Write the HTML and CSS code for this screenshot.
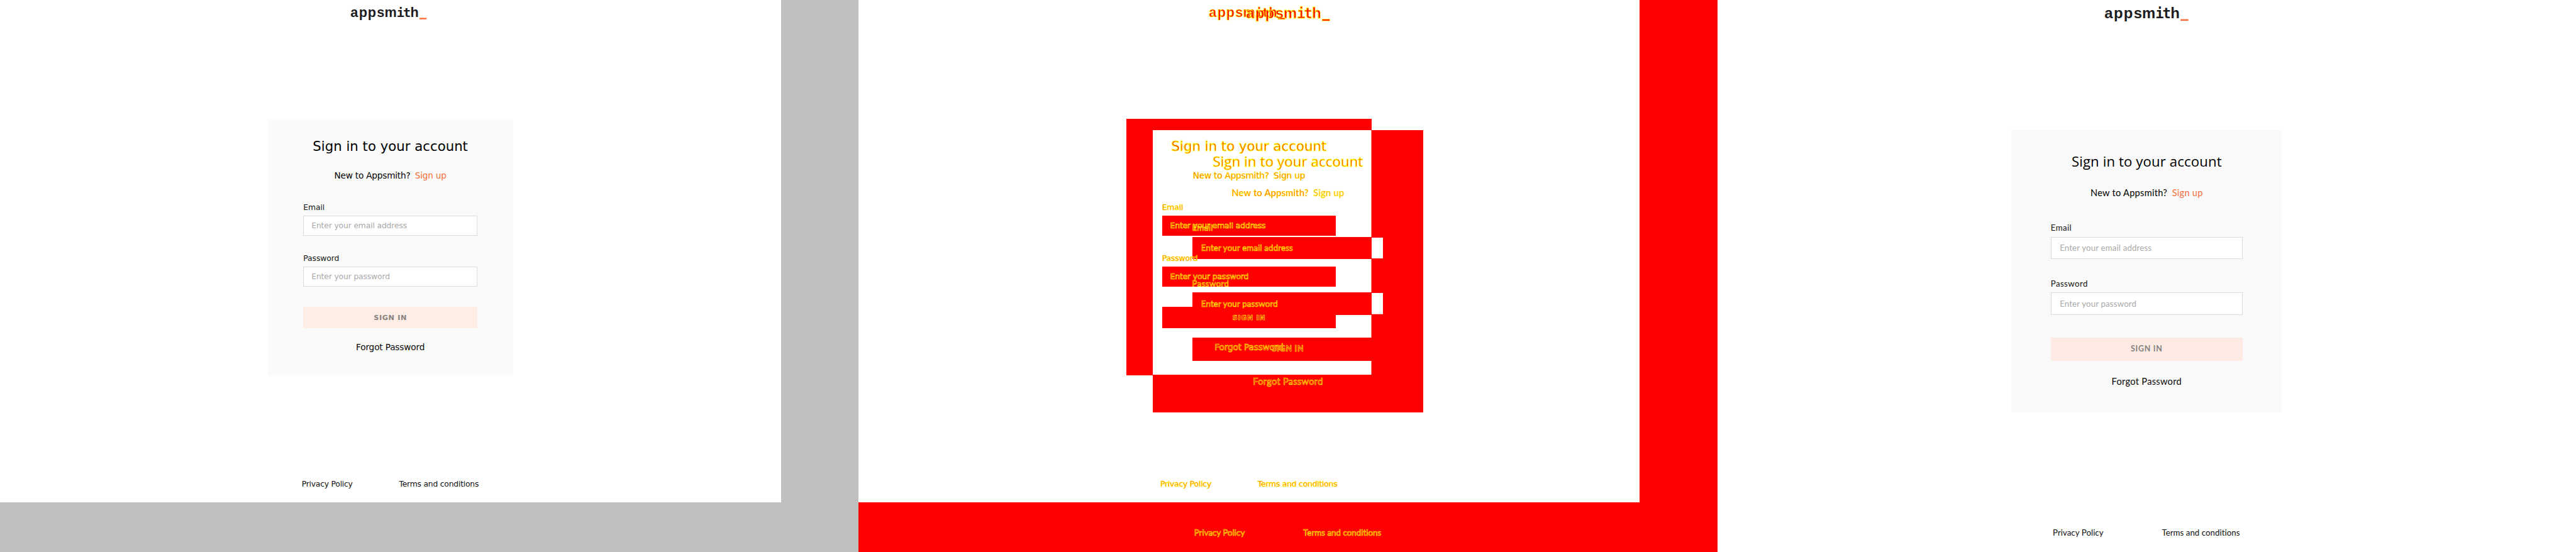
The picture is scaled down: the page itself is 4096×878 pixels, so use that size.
FILE: index.html
```html
<!DOCTYPE html>
<html lang="en">
<head>
<meta charset="utf-8">
<title>Sign in</title>
<link rel="stylesheet" href="styles.css">
</head>
<body>
<main class="compare">
  <section class="pane pane-before">
    <div class="screen screen-a">
      <svg class="logo" viewBox="0 0 140 32"><g class="logo-word"><text x="1.3 16.5 32.5 48.9 62.5" y="22.7">appsm</text><text class="logo-mono" x="84.4 95.8" y="22.7">it</text><text x="109" y="22.7">h</text></g><rect class="logo-bar" x="125.3" y="24.1" width="12.7" height="2.7"/></svg>
      <form class="card">
        <h1 class="title">Sign in to your account</h1>
        <p class="prompt"><span>New to Appsmith?</span><a class="signup">Sign up</a></p>
        <label class="label l-email">Email</label>
        <div class="input i-email"><span>Enter your email address</span></div>
        <label class="label l-pass">Password</label>
        <div class="input i-pass"><span>Enter your password</span></div>
        <div class="button"><span>SIGN IN</span></div>
        <a class="forgot">Forgot Password</a>
      </form>
      <footer class="footer"><a class="privacy">Privacy Policy</a><a class="terms">Terms and conditions</a></footer>
    </div>
  </section>

  <section class="pane pane-diff">
    <div class="screen screen-a">
      <svg class="logo" viewBox="0 0 140 32"><g class="logo-word"><text x="1.3 16.5 32.5 48.9 62.5" y="22.7">appsm</text><text class="logo-mono" x="84.4 95.8" y="22.7">it</text><text x="109" y="22.7">h</text></g><rect class="logo-bar" x="125.3" y="24.1" width="12.7" height="2.7"/></svg>
      <div class="card">
        <h1 class="title">Sign in to your account</h1>
        <p class="prompt"><span>New to Appsmith?</span><a class="signup">Sign up</a></p>
        <label class="label l-email">Email</label>
        <div class="input i-email"><span>Enter your email address</span></div>
        <label class="label l-pass">Password</label>
        <div class="input i-pass"><span>Enter your password</span></div>
        <div class="button"><span>SIGN IN</span></div>
        <a class="forgot">Forgot Password</a>
      </div>
      <footer class="footer"><a class="privacy">Privacy Policy</a><a class="terms">Terms and conditions</a></footer>
    </div>
    <div class="screen screen-b">
      <svg class="logo" viewBox="0 0 140 32"><g class="logo-word"><text x="1.3 16.5 32.5 48.9 62.5" y="22.7">appsm</text><text class="logo-mono" x="84.4 95.8" y="22.7">it</text><text x="109" y="22.7">h</text></g><rect class="logo-bar" x="125.3" y="24.1" width="12.7" height="2.7"/></svg>
      <div class="card">
        <h1 class="title">Sign in to your account</h1>
        <p class="prompt"><span>New to Appsmith?</span><a class="signup">Sign up</a></p>
        <label class="label l-email">Email</label>
        <div class="input i-email"><span>Enter your email address</span></div>
        <label class="label l-pass">Password</label>
        <div class="input i-pass"><span>Enter your password</span></div>
        <div class="button"><span>SIGN IN</span></div>
        <a class="forgot">Forgot Password</a>
      </div>
      <footer class="footer"><a class="privacy">Privacy Policy</a><a class="terms">Terms and conditions</a></footer>
    </div>
  </section>

  <section class="pane pane-after">
    <div class="screen screen-b">
      <svg class="logo" viewBox="0 0 140 32"><g class="logo-word"><text x="1.3 16.5 32.5 48.9 62.5" y="22.7">appsm</text><text class="logo-mono" x="84.4 95.8" y="22.7">it</text><text x="109" y="22.7">h</text></g><rect class="logo-bar" x="125.3" y="24.1" width="12.7" height="2.7"/></svg>
      <form class="card">
        <h1 class="title">Sign in to your account</h1>
        <p class="prompt"><span>New to Appsmith?</span><a class="signup">Sign up</a></p>
        <label class="label l-email">Email</label>
        <div class="input i-email"><span>Enter your email address</span></div>
        <label class="label l-pass">Password</label>
        <div class="input i-pass"><span>Enter your password</span></div>
        <div class="button"><span>SIGN IN</span></div>
        <a class="forgot">Forgot Password</a>
      </form>
      <footer class="footer"><a class="privacy">Privacy Policy</a><a class="terms">Terms and conditions</a></footer>
    </div>
  </section>
</main>
</body>
</html>
```
FILE: styles.css
```css
/* 1rem is one design pixel */
html { font-size: 0.886580px; }
* { box-sizing: border-box; margin: 0; padding: 0; }
body { width: 4096px; height: 878px; overflow: hidden; background: #fff; }

.compare { display: grid; grid-template-columns: repeat(3, 1540rem); height: 878px; }
.pane { display: grid; height: 990rem; overflow: hidden; }
.pane > .screen { grid-area: 1 / 1; }
.pane-before { background: #bfbfbf; }
.pane-diff { background: #f00; isolation: isolate; }
.pane-after { background: #fff; }

.screen { display: flex; flex-direction: column; align-items: center; color: #000; white-space: nowrap; }
.card { display: flex; flex-direction: column; align-items: center; flex: none; }
.title { font-weight: 400; }
.prompt { display: flex; color: #000; }
.signup { color: #f96e3b; }
.label { align-self: flex-start; color: #161616; }
.input { flex: none; display: flex; align-items: center; background: #fff; border: 1px solid #dcdcdc; color: #a9a9a9; }
.button { flex: none; display: flex; align-items: center; justify-content: center; color: #858280; font-weight: 700; }
.forgot { color: #090707; }
.footer { display: flex; align-self: flex-start; color: #111; }
.logo { display: block; flex: none; }
.logo-word { fill: #1d1d1f; font: 700 24.5px "Liberation Sans", Arial, sans-serif; }
.logo-mono { font: 700 22.8px "DejaVu Sans Mono", monospace; }
.logo-bar { fill: #ff6d35; }

/* 1401 x 901 screen */
.screen-a { width: 1401rem; height: 901rem; padding-right: 1rem; background: #fff; font-family: "DejaVu Sans", sans-serif; }
.screen-a .logo { width: 140rem; height: 32rem; margin: 8rem 6rem 0 0; }
.screen-a .card { width: 440rem; height: 460rem; margin-top: 173rem; padding: 34rem 64rem 0; background: #fafafa; }
.screen-a .title { font-size: 24rem; line-height: 32rem; }
.screen-a .prompt { margin-top: 26.2rem; gap: 8.2rem; font-size: 15.5rem; line-height: 20rem; letter-spacing: -0.28rem; }
.screen-a .label { font-size: 14rem; line-height: 18rem; letter-spacing: -0.14rem; }
.screen-a .l-email { margin-top: 38.3rem; }
.screen-a .l-pass { margin-top: 31.5rem; }
.screen-a .input { width: 312rem; height: 36rem; padding-left: 13.5rem; margin-top: 5.5rem; font-size: 14rem; line-height: 18rem; letter-spacing: -0.2rem; }
.screen-a .button { width: 312rem; height: 38rem; margin-top: 37rem; background: #feede5; font-size: 12.8rem; letter-spacing: 0.65rem; }
.screen-a .forgot { margin-top: 24.5rem; font-size: 15.5rem; line-height: 20rem; letter-spacing: -0.23rem; }
.screen-a .footer { margin-top: 186.5rem; padding-left: 541rem; font-size: 14rem; line-height: 18rem; letter-spacing: -0.28rem; }
.screen-a .privacy { width: 174.7rem; }

/* 1540 x 990 screen */
.screen-b { width: 1540rem; height: 990rem; font-family: Lato, sans-serif; }
.screen-b .logo { width: 154rem; height: 35.2rem; margin-top: 8rem; }
.screen-b .logo-bar { fill: #f2703f; }
.screen-b .card { width: 484rem; height: 506rem; margin-top: 190.8rem; padding: 37.3rem 70rem 0; background: #f9f9f9; }
.screen-b .title { font-family: "Open Sans", sans-serif; font-size: 25rem; line-height: 36rem; letter-spacing: 0.15rem; }
.screen-b .prompt { margin-top: 28.3rem; gap: 8.5rem; font-size: 16.5rem; line-height: 20rem; letter-spacing: 0.3rem; }
.screen-b .signup { color: #f2703f; }
.screen-b .label { font-size: 15rem; line-height: 18rem; letter-spacing: 0.45rem; }
.screen-b .l-email { margin-top: 44.8rem; }
.screen-b .l-pass { margin-top: 35.4rem; }
.screen-b .input { width: 344rem; height: 40rem; padding: 1rem 0 0 15rem; margin-top: 6.6rem; font-size: 15rem; line-height: 18rem; letter-spacing: 0.17rem; }
.screen-b .i-pass { padding-top: 3rem; }
.screen-b .button { width: 344rem; height: 41rem; margin-top: 41rem; padding-bottom: 1rem; background: #fceae3; font-size: 14rem; letter-spacing: 0.84rem; }
.screen-b .forgot { margin-top: 27.8rem; font-size: 16.5rem; line-height: 20rem; letter-spacing: 0.33rem; }
.screen-b .footer { margin-top: 207.7rem; padding-left: 601.6rem; font-size: 15rem; line-height: 18rem; letter-spacing: 0.04rem; }
.screen-b .privacy { width: 195.6rem; }

/* Difference view: changed areas red, glyph edges yellow */
.pane-diff .logo-word, .pane-diff .logo-bar { fill: #f00; stroke: #ff0; stroke-width: 0.8; }
.pane-diff .screen-b { background: none; }
.pane-diff .card { background: #f00; }
.pane-diff .screen-b .card { background: linear-gradient(#fff, #fff) 0 0 / 392rem 439rem no-repeat #f00; }
.pane-diff .input, .pane-diff .button { background: #f00; border-color: #f00; }
.pane-diff .screen-b .input { background: linear-gradient(#fff, #fff) 321rem 0 / 22rem 38rem no-repeat #f00; }
.pane-diff .screen-a .input, .pane-diff .screen-a .button { position: relative; z-index: 1; }
.pane-diff span, .pane-diff a, .pane-diff label, .pane-diff h1, .pane-diff .logo {
  position: relative; z-index: 2; color: #f00; -webkit-text-stroke: 0.6px #ff0;
}
.pane-diff h1 { -webkit-text-stroke-width: 0.9px; }
.pane-diff .logo { -webkit-text-stroke: 0; }
```
